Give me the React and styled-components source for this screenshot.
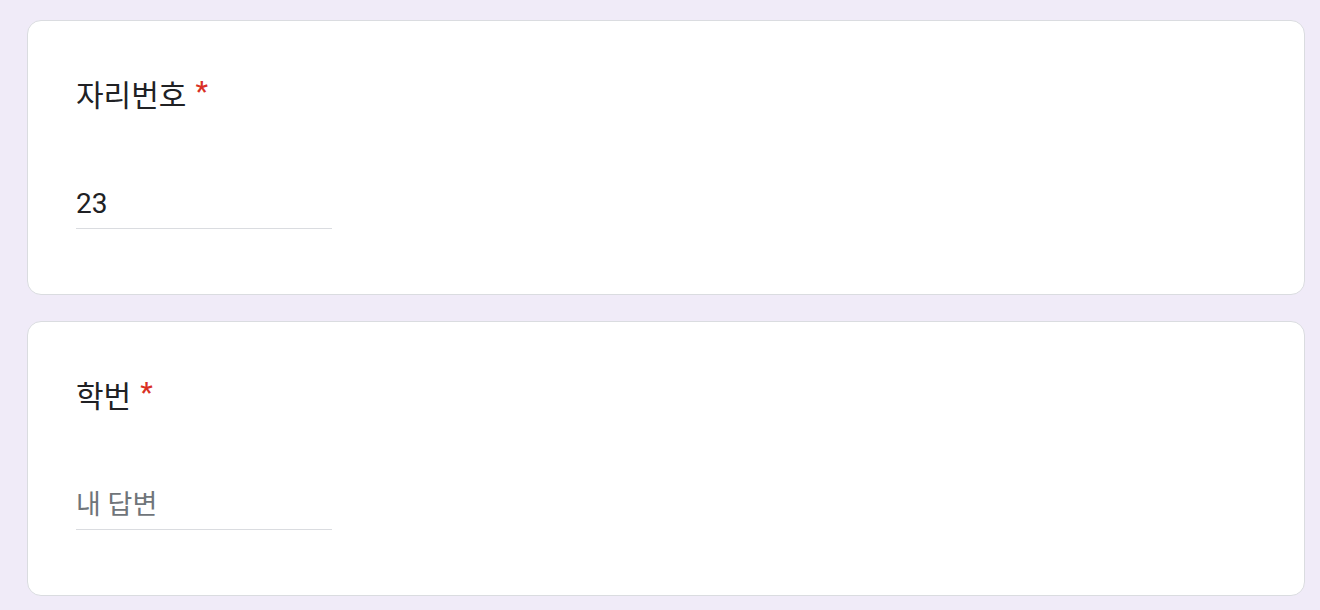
import styled, { createGlobalStyle } from 'styled-components'

const GlobalStyle = createGlobalStyle`
    html, body {
        margin: 0;
        padding: 0;
        background: #f0ebf8;
    }
    body {
        font-family: Roboto, "Noto Sans CJK KR", sans-serif;
    }
`

const Page = styled.div`
    display: flex;
    flex-direction: column;
    gap: 26px;
    padding: 20px 15px 0 27px;
`

const Card = styled.section`
    box-sizing: border-box;
    width: 1278px;
    height: 275px;
    background: #fff;
    border: 1px solid #dadce0;
    border-radius: 14px;
    padding: 48px 48px 0 48px;
    display: flex;
    flex-direction: column;
`

const Title = styled.div`
    height: 48px;
    display: flex;
    align-items: center;
    font-family: Roboto, "Noto Sans CJK KR", sans-serif;
    font-size: 30px;
    color: #202124;

    span {
        color: #d93025;
        padding-left: 9px;
        font-size: 28px;
        font-weight: 500;
        align-self: flex-start;
        margin-top: 6px;
    }
`

const Field = styled.input`
    box-sizing: border-box;
    margin-top: 65px;
    width: 256px;
    height: 47px;
    padding: 0 0 4px 0;
    border: none;
    border-bottom: 1px solid #dadce0;
    outline: none;
    background: transparent;
    font-family: Roboto, "Noto Sans CJK KR", sans-serif;
    font-size: 28px;
    color: #202124;

    &::placeholder {
        color: #70757a;
        opacity: 1;
        font-size: 27px;
    }
`

function Question({ label, value }) {
    return (
        <Card>
            <Title>
                {label}<span>*</span>
            </Title>
            <Field defaultValue={value} placeholder='내 답변' />
        </Card>
    )
}

export default function App() {
    return (
        <>
            <GlobalStyle />
            <Page>
                <Question label='자리번호' value='23' />
                <Question label='학번' />
            </Page>
        </>
    )
}
